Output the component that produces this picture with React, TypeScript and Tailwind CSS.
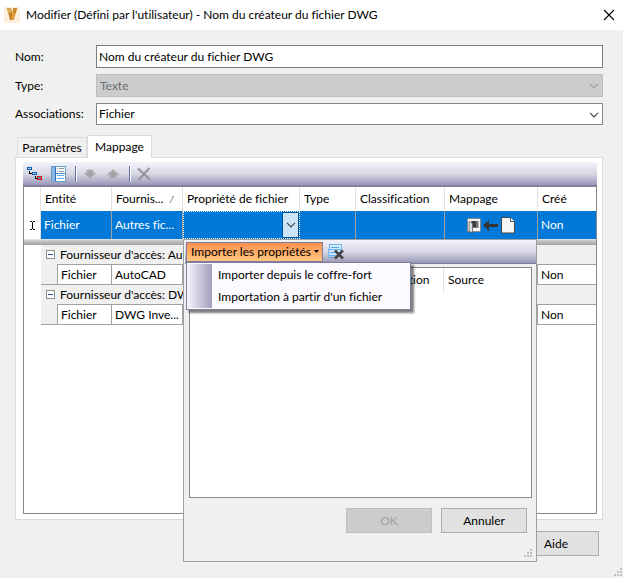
import { useState } from "react"
import { clsx } from "clsx"

type Mapping = {
  entity: string
  provider: string
  created: string
}

type MappingGroup = {
  title: string
  rows: Mapping[]
}

const groups: MappingGroup[] = [
  {
    title: "Fournisseur d'accès: AutoCAD",
    rows: [{ entity: "Fichier", provider: "AutoCAD", created: "Non" }],
  },
  {
    title: "Fournisseur d'accès: DWG Inventor",
    rows: [{ entity: "Fichier", provider: "DWG Inve...", created: "Non" }],
  },
]

const Chevron = ({ className }: { className?: string }) => (
  <svg viewBox="0 0 10 6" className={clsx("h-[6px] w-[10px]", className)}>
    <path d="M1 .8 5 4.8 9 .8" fill="none" stroke="currentColor" strokeWidth="1.2" />
  </svg>
)

const VaultLogo = () => (
  <svg viewBox="0 0 16 16" className="h-4 w-4">
    <rect width="16" height="16" fill="#fdeedd" />
    <path d="M3 1h4l1.500 7V13H6z" fill="#b8822c" />
    <path d="M3 1h4l.8 3.800L4.600 7z" fill="#e0a850" />
    <path d="M13 1H9.500L8 7l-.5 6H10z" fill="#e79a35" />
    <path d="M13 1H9.500l-1 4 3.300 1.500z" fill="#c98a2e" />
  </svg>
)

const TreeIcon = () => (
  <svg viewBox="0 0 16 16" className="h-4 w-4" shapeRendering="crispEdges">
    <path d="M2.500 5v2.500h2M8.500 10v2.500h2" fill="none" stroke="#000" />
    <rect x=".5" y="1.500" width="4" height="2" fill="#9fd0f5" stroke="#1560b4" />
    <rect x="5.500" y="6.500" width="4" height="2" fill="#9fd0f5" stroke="#1560b4" />
    <rect x="10.500" y="10.500" width="4" height="3" fill="#4a90d9" stroke="#f00000" />
  </svg>
)

const ListIcon = () => (
  <svg viewBox="0 0 16 16" className="h-4 w-4" shapeRendering="crispEdges">
    <rect x=".5" y=".5" width="14" height="15" fill="#fff" stroke="#6a9cc8" />
    <rect x="1" y="1" width="3" height="14" fill="#8ab8e0" />
    <path d="M4.500 1v14" stroke="#2a6eb5" />
    <path d="M6 2.500h1M8 2.500h5M6 5.500h1M8 5.500h5" stroke="#9a9a9a" />
    <path d="M5 7.500h9" stroke="#4a90d0" />
    <path d="M6 9.500h7M6 12.500h7" stroke="#58b0f0" />
  </svg>
)

const ArrowIcon = ({ up }: { up?: boolean }) => (
  <svg viewBox="0 0 14 10" className={clsx("h-[10px] w-[14px]", up && "rotate-180")}>
    <path d="M4 1h6v3h3L7 9.500 1 4h3z" fill="#a5a5a8" stroke="#b4b4b8" strokeWidth=".8" />
  </svg>
)

const DeleteIcon = () => (
  <svg viewBox="0 0 14 14" className="h-[14px] w-[14px]">
    <path d="M1 1.500 13 12.500M12.500 1 1.500 13" stroke="#96969a" strokeWidth="2.200" />
  </svg>
)

const ClearListIcon = () => (
  <svg viewBox="0 0 17 17" className="h-[17px] w-[17px]">
    <rect x="2.500" y="1.500" width="12" height="5" fill="#d9ecfb" stroke="#6db5f2" />
    <rect x="1.500" y="6.500" width="12" height="6" fill="#c9e2f8" stroke="#6db5f2" />
    <path d="M4 4.500h8M3 9.500h7M1 14.500h6" stroke="#58a8ea" />
    <path d="M8 7.500l8 8M16 7.500l-8 8" stroke="#444" strokeWidth="2.600" />
  </svg>
)

const MappingIcon = () => (
  <svg viewBox="0 0 48 17" className="h-[17px] w-12">
    <rect x=".5" y="1.500" width="13" height="13" rx="1" fill="#f4f4f4" stroke="#8a8a8a" />
    <path d="M4 4h7.500v7H4z" fill="#777" />
    <path d="M5 4h4v6H5z" fill="#3c3c3c" />
    <path d="M2 4.500l3.500 2V16L2 14z" fill="#dedede" stroke="#666" strokeWidth=".8" />
    <path d="M16 8.500 22 3v4h9v3h-9v4z" fill="#333" />
    <path d="M34.500.5h9l4 4v11.500h-13z" fill="#f6f6f6" stroke="#444" />
    <path d="M43.500.5v4h4" fill="#fff" stroke="#555" />
  </svg>
)

// resize handle, bottom right corner of a window
const Grip = () => (
  <svg viewBox="0 0 8 8" className="h-2 w-2" shapeRendering="crispEdges">
    <path
      d="M6 0h2v2H6zM3 3h2v2H3zM6 3h2v2H6zM0 6h2v2H0zM3 6h2v2H3zM6 6h2v2H6z"
      fill="#bfbfbf"
    />
  </svg>
)

const Separator = () => <span className="h-4 w-[2px] border-l border-[#6a6aa8] bg-white" />

const barClass = "bg-linear-to-b from-[#f3f3fb] via-[#d9d9e6] to-[#9a98b8]"
const headClass = "h-6 border-r border-[#e0e0e0] px-1 text-left font-normal"
const selectedClass = "h-7 border-r border-[#a0a0a0] bg-[#0078d7] px-[3px] text-white"
const cellClass = "h-[21px] border-y border-r border-[#a0a0a0] px-[3px]"
const buttonClass = "h-[25px] w-[86px] border"

const PropertyPopup = () => {
  const [menuOpen, setMenuOpen] = useState(true)

  return (
    <div className="absolute -left-px top-[27px] z-10 w-[354px] border border-[#a0a0a0] bg-[#f0f0f0] text-black">
      <div className={clsx("ml-px flex h-6 items-center gap-1 border-b border-[#7f7d9c] pl-px", barClass)}>
        <div className="relative">
          <button
            type="button"
            aria-expanded={menuOpen}
            onClick={() => setMenuOpen(!menuOpen)}
            className="flex h-5 w-[137px] items-center justify-between whitespace-nowrap border border-[#7f7d9c] bg-linear-to-b from-[#fe9050] to-[#ffc880] pl-1 pr-[3px]"
          >
            Importer les propriétés
            <svg viewBox="0 0 5 3" className="h-[3px] w-[5px]">
              <path d="M0 0h5L2.500 3z" fill="#000" />
            </svg>
          </button>
          {menuOpen && (
            <div
              role="menu"
              className="absolute left-0 top-full z-10 flex w-[225px] border border-[#7f7d9c] bg-[#fcfaff] py-px shadow-[3px_3px_2px_rgba(0,0,0,0.5)]"
            >
              <div className="w-[25px] bg-linear-to-r from-[#f8f8ff] to-[#a09eba]" />
              <div className="flex flex-1 flex-col whitespace-nowrap">
                <button type="button" role="menuitem" className="h-[22px] pl-[6px] text-left">
                  Importer depuis le coffre-fort
                </button>
                <button type="button" role="menuitem" className="h-[22px] pl-[6px] text-left">
                  Importation à partir d'un fichier
                </button>
              </div>
            </div>
          )}
        </div>
        <button type="button" aria-label="Effacer la liste">
          <ClearListIcon />
        </button>
      </div>

      <div className="ml-[5px] mr-1 mt-[3px] h-[231px] border border-[#828790] bg-white">
        <table className="w-full table-fixed border-separate border-spacing-0">
          <colgroup>
            <col className="w-[166px]" />
            <col className="w-[88px]" />
            <col />
          </colgroup>
          <thead>
            <tr>
              <td className={headClass} />
              <th className={headClass}>Classification</th>
              <th className="px-1 text-left font-normal">Source</th>
            </tr>
          </thead>
        </table>
      </div>

      <div className="flex justify-end gap-[9px] pr-[9px] pt-[10px]">
        <button type="button" disabled className={clsx(buttonClass, "border-[#bfbfbf] bg-[#cccccc] text-[#a0a0a0]")}>
          OK
        </button>
        <button type="button" className={clsx(buttonClass, "border-[#adadad] bg-[#e1e1e1]")}>
          Annuler
        </button>
      </div>
      <div className="flex justify-end pb-1 pr-1 pt-4">
        <Grip />
      </div>
    </div>
  )
}

const MappingTable = () => (
  <table className="w-full table-fixed border-separate border-spacing-0 whitespace-nowrap">
    <colgroup>
      <col className="w-[17px]" />
      <col className="w-[17px]" />
      <col className="w-[54px]" />
      <col className="w-[71px]" />
      <col className="w-[117px]" />
      <col className="w-[56px]" />
      <col className="w-[89px]" />
      <col className="w-[93px]" />
      <col />
    </colgroup>
    <thead>
      <tr>
        <td className="border-r border-[#e0e0e0]" />
        <th colSpan={2} className={headClass}>
          Entité
        </th>
        <th className={headClass}>
          <span className="flex items-center justify-between pr-1">
            Fournis...
            <svg viewBox="0 0 5 7" className="h-[7px] w-[5px]">
              <path d="M4.500 0 1 7M3 0h2" stroke="#8a8a8a" fill="none" />
            </svg>
          </span>
        </th>
        <th className={headClass}>Propriété de fichier</th>
        <th className={headClass}>Type</th>
        <th className={headClass}>Classification</th>
        <th className={headClass}>Mappage</th>
        <th className="px-1 text-left font-normal">Créé</th>
      </tr>
    </thead>
    <tbody>
      <tr>
        <td className="border-r border-[#e0e0e0]">
          <svg viewBox="0 0 5 9" className="mx-auto h-[9px] w-[5px]" shapeRendering="crispEdges">
            <path d="M0 .5h2M3 .5h2M2.500 1v7M0 8.500h2M3 8.500h2" stroke="#000" />
          </svg>
        </td>
        <td colSpan={2} className={selectedClass}>
          Fichier
        </td>
        <td className={selectedClass}>Autres fic...</td>
        <td className="relative border border-dotted border-white bg-[#0078d7] p-0">
          <button
            type="button"
            aria-label="Choisir une propriété"
            className="ml-auto flex h-[26px] w-[17px] items-center justify-center border border-[#005499] bg-[#cce4f7] text-[#444]"
          >
            <Chevron />
          </button>
          <PropertyPopup />
        </td>
        <td className={selectedClass} />
        <td className={selectedClass} />
        <td className={selectedClass}>
          <span className="flex justify-center">
            <MappingIcon />
          </span>
        </td>
        <td className="bg-[#0078d7] px-[3px] text-white">Non</td>
      </tr>
      <tr>
        <td colSpan={9} className="h-[6px] border-t border-[#e0e0e0] bg-linear-to-b from-[#d0d0d0] to-[#a0a0a0] p-0" />
      </tr>
    </tbody>
    {groups.map((group) => (
      <tbody key={group.title}>
        <tr>
          <td />
          <th colSpan={3} className="h-[19px] overflow-hidden bg-[#f0f0f0] p-0 text-left font-normal">
            <span className="flex items-center gap-[5px] pl-[5px]">
              <button
                type="button"
                aria-label="Réduire"
                className="flex h-[9px] w-[9px] shrink-0 items-center justify-center border border-[#919191] bg-white"
              >
                <span className="h-px w-[5px] bg-[#3050a0]" />
              </button>
              <span className="min-w-0 flex-1 overflow-hidden">{group.title}</span>
            </span>
          </th>
          <td colSpan={5} className="bg-[#f0f0f0]" />
        </tr>
        {group.rows.map((row) => (
          <tr key={row.provider} className="bg-white">
            <td />
            <td className="border-b border-r border-[#a0a0a0] bg-[#f0f0f0]" />
            <td className={cellClass}>{row.entity}</td>
            <td className={cellClass}>{row.provider}</td>
            <td className={cellClass} />
            <td className={cellClass} />
            <td className={cellClass} />
            <td className={cellClass} />
            <td className="border-y border-[#a0a0a0] px-[3px]">{row.created}</td>
          </tr>
        ))}
      </tbody>
    ))}
  </table>
)

export default function App() {
  const [name, setName] = useState("Nom du créateur du fichier DWG")

  return (
    <div className="flex min-h-screen flex-col bg-[#f0f0f0] font-['Lato','Open_Sans',sans-serif] text-[12px] leading-4 text-black [font-variant-ligatures:none]">
      <header className="flex h-[30px] items-center gap-[6px] bg-white pl-1 pr-2">
        <VaultLogo />
        <h1>Modifier (Défini par l'utilisateur) - Nom du créateur du fichier DWG</h1>
        <button type="button" aria-label="Fermer" className="ml-auto">
          <svg viewBox="0 0 12 12" className="h-3 w-3">
            <path d="M1 1l10 10M11 1 1 11" stroke="#000" strokeWidth="1.100" />
          </svg>
        </button>
      </header>

      <main className="flex flex-1 flex-col pl-[15px] pr-5 pt-[15px]">
        <form className="grid grid-cols-[81px_1fr] items-center gap-y-[6px]">
          <label htmlFor="name">Nom:</label>
          <input
            id="name"
            value={name}
            onChange={(e) => setName(e.target.value)}
            className="h-[23px] border border-[#7a7a7a] bg-white px-[2px] outline-none"
          />
          <label htmlFor="type">Type:</label>
          <div className="relative">
            <select
              id="type"
              disabled
              className="block h-[23px] w-full appearance-none border border-[#bfbfbf] bg-[#cccccc] px-[3px] text-[#6d6d6d] opacity-100"
            >
              <option>Texte</option>
            </select>
            <Chevron className="pointer-events-none absolute right-1 top-[9px] text-[#a0a0a0]" />
          </div>
          <label htmlFor="links">Associations:</label>
          <div className="relative">
            <select
              id="links"
              className="block h-[22px] w-full appearance-none border border-[#828790] bg-white px-[2px]"
            >
              <option>Fichier</option>
            </select>
            <Chevron className="pointer-events-none absolute right-1 top-[9px] text-[#444]" />
          </div>
        </form>

        <div role="tablist" className="flex items-end pl-[2px] pt-[10px]">
          <button
            type="button"
            role="tab"
            aria-selected={false}
            className="h-5 w-[70px] border border-b-0 border-[#dcdcdc]"
          >
            Paramètres
          </button>
          <button
            type="button"
            role="tab"
            aria-selected
            className="relative -mb-px h-[23px] w-[65px] border border-b-0 border-[#dcdcdc] bg-white"
          >
            Mappage
          </button>
        </div>

        <section className="flex flex-1 flex-col border border-[#dcdcdc] bg-white pb-[5px] pl-[7px] pr-[5px] pt-1">
          <div className={clsx("flex h-6 items-center border-b border-[#7f7d9c] pl-1", barClass)}>
            <div className="flex items-center gap-2">
              <button type="button" aria-label="Arborescence">
                <TreeIcon />
              </button>
              <button type="button" aria-label="Liste">
                <ListIcon />
              </button>
              <Separator />
            </div>
            <div className="flex items-center gap-[9px] pl-[6px]">
              <button type="button" disabled aria-label="Descendre">
                <ArrowIcon />
              </button>
              <button type="button" disabled aria-label="Monter">
                <ArrowIcon up />
              </button>
              <Separator />
            </div>
            <button type="button" disabled aria-label="Supprimer" className="pl-[6px]">
              <DeleteIcon />
            </button>
          </div>
          <div className="flex-1 border border-[#828790]">
            <MappingTable />
          </div>
        </section>

        <div className="flex justify-end pr-1 pt-[11px]">
          <button type="button" className={clsx(buttonClass, "border-[#adadad] bg-[#e1e1e1]")}>
            Aide
          </button>
        </div>
      </main>

      <footer className="flex justify-end pb-[2px] pr-px pt-3">
        <Grip />
      </footer>
    </div>
  )
}
